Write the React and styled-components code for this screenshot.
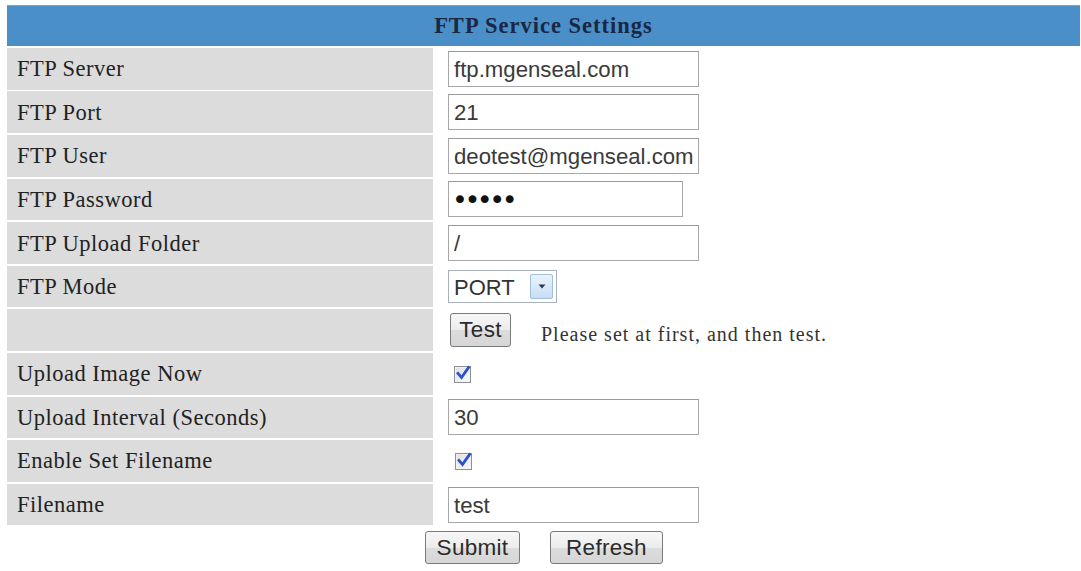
import React from "react";
import styled, { createGlobalStyle } from "styled-components";

const Global = createGlobalStyle`
  html, body { margin: 0; padding: 0; background: #ffffff; }
  body { font-family: "Liberation Serif", "Times New Roman", serif; }
`;

const Page = styled.div`
  padding: 5px 1px 0 7px;
  width: 1073px;
`;

const Form = styled.form`
  display: flex;
  flex-direction: column;
`;

const Sheet = styled.div`
  display: grid;
  grid-template-columns: 426px 1fr;
  row-gap: 1.9px;
  column-gap: 2px;
`;

const Header = styled.div`
  grid-column: 1 / -1;
  height: 41px;
  background: #4a8fc7;
  border-top: 1px solid #6aa6d6;
  box-sizing: border-box;
  display: flex;
  align-items: center;
  justify-content: center;
  font-family: "Liberation Serif", "Times New Roman", serif;
  font-weight: bold;
  font-size: 22.5px;
  color: #1a2744;
  letter-spacing: 1px;
`;

const Label = styled.div`
  height: 41.7px;
  background: #dcdcdc;
  display: flex;
  align-items: center;
  padding-left: 10px;
  font-family: "Liberation Serif", "Times New Roman", serif;
  font-size: 22.5px;
  letter-spacing: 0.5px;
  color: #222222;
  box-sizing: border-box;
  padding-top: 1px;
`;

const Value = styled.div`
  height: 41.7px;
  display: flex;
  align-items: center;
  padding-left: 13px;
  box-sizing: border-box;
  background: #ffffff;
`;

const TextInput = styled.input`
  width: ${(p) => p.$w || 251}px;
  height: 36px;
  box-sizing: border-box;
  border: 1px solid #a7a7a7;
  border-top-color: #9a9a9a;
  padding: 2px 0 0 5px;
  margin: 0;
  font-family: "Liberation Sans", Arial, sans-serif;
  font-size: 22.2px;
  color: #3a3a3a;
  background: #ffffff;
  outline: none;
`;

const PasswordInput = styled(TextInput)`
  font-family: "DejaVu Sans", sans-serif;
  font-size: 27px;
  letter-spacing: -3.5px;
  color: #111;
  padding: 0 0 0 3px;
`;

const SelectWrap = styled.div`
  position: relative;
  width: 109px;
  height: 33px;
`;

const Select = styled.select`
  appearance: none;
  -webkit-appearance: none;
  width: 100%;
  height: 100%;
  box-sizing: border-box;
  border: 1px solid #a9b1bd;
  background: #ffffff;
  padding: 1px 0 0 5px;
  margin: 0;
  font-family: "Liberation Sans", Arial, sans-serif;
  font-size: 22px;
  color: #333;
  outline: none;
`;

const SelectArrow = styled.span`
  position: absolute;
  top: 4px;
  right: 4px;
  width: 23px;
  height: 25px;
  box-sizing: border-box;
  border: 1px solid #9fbde0;
  border-radius: 2px;
  background: linear-gradient(#eaf3fd, #c9ddf5);
  display: flex;
  align-items: center;
  justify-content: center;
  pointer-events: none;
`;

const Button = styled.button`
  width: ${(p) => p.$w}px;
  height: ${(p) => p.$h || 33}px;
  box-sizing: border-box;
  border: 1px solid #7a7a7a;
  border-radius: 3px;
  background: linear-gradient(#f7f7f7 0%, #ececec 50%, #dcdcdc 51%, #d6d6d6 100%);
  font-family: "Liberation Sans", Arial, sans-serif;
  font-size: 22.5px;
  letter-spacing: 0.3px;
  color: #2b2b2b;
  padding: 0;
  margin: 0;
  cursor: pointer;
`;

const TestButton = styled(Button)`
  margin-left: 2px;
`;

const Hint = styled.span`
  margin-left: 30px;
  margin-top: 8px;
  font-family: "Liberation Serif", "Times New Roman", serif;
  font-size: 20px;
  letter-spacing: 1px;
  color: #333;
`;

const CheckWrap = styled.label`
  position: relative;
  display: inline-flex;
  width: 17px;
  height: 17px;
  margin-left: ${(p) => p.$ml || 7}px;
  margin-top: ${(p) => p.$mt || 0}px;
`;

const CheckBox = styled.input`
  appearance: none;
  -webkit-appearance: none;
  margin: 0;
  width: 17px;
  height: 17px;
  box-sizing: border-box;
  border: 1px solid #8d9096;
  background: linear-gradient(135deg, #dcdfe3, #fbfbfb);
  box-shadow: inset 0 0 0 1px #f2f2f2;
`;

const CheckMark = styled.svg`
  position: absolute;
  left: 1px;
  top: -1px;
  pointer-events: none;
`;

const Actions = styled.div`
  display: flex;
  justify-content: center;
  gap: 30px;
  margin-top: 6px;
  padding-left: 1px;
`;

function Check({ ml, mt }) {
  return (
    <CheckWrap $ml={ml} $mt={mt}>
      <CheckBox type="checkbox" defaultChecked />
      <CheckMark width="16" height="17" viewBox="0 0 16 17">
        <path d="M3 8.5 L6.5 12.5 L13.5 2.5" fill="none" stroke="#2d53c9" strokeWidth="2.8" strokeLinecap="square" />
      </CheckMark>
    </CheckWrap>
  );
}

export default function App() {
  return (
    <Page>
      <Global />
      <Form onSubmit={(e) => e.preventDefault()}>
        <Sheet>
          <Header>FTP Service Settings</Header>

          <Label>FTP Server</Label>
          <Value><TextInput defaultValue="ftp.mgenseal.com" /></Value>

          <Label>FTP Port</Label>
          <Value><TextInput defaultValue="21" /></Value>

          <Label>FTP User</Label>
          <Value><TextInput defaultValue="deotest@mgenseal.com" /></Value>

          <Label>FTP Password</Label>
          <Value><PasswordInput type="password" $w={235} defaultValue="abcde" /></Value>

          <Label>FTP Upload Folder</Label>
          <Value><TextInput defaultValue="/" /></Value>

          <Label>FTP Mode</Label>
          <Value>
            <SelectWrap>
              <Select defaultValue="PORT">
                <option value="PORT">PORT</option>
                <option value="PASV">PASV</option>
              </Select>
              <SelectArrow>
                <svg width="8" height="5" viewBox="0 0 8 5">
                  <path d="M0.5 0.5 L7.5 0.5 L4 4.5 Z" fill="#2a3a55" />
                </svg>
              </SelectArrow>
            </SelectWrap>
          </Value>

          <Label />
          <Value>
            <TestButton type="button" $w={61} $h={34}>Test</TestButton>
            <Hint>Please set at first, and then test.</Hint>
          </Value>

          <Label>Upload Image Now</Label>
          <Value><Check ml={6} mt={2} /></Value>

          <Label>Upload Interval (Seconds)</Label>
          <Value><TextInput defaultValue="30" /></Value>

          <Label>Enable Set Filename</Label>
          <Value><Check ml={7} mt={2} /></Value>

          <Label>Filename</Label>
          <Value><TextInput defaultValue="test" /></Value>
        </Sheet>

        <Actions>
          <Button type="submit" $w={95}>Submit</Button>
          <Button type="button" $w={113}>Refresh</Button>
        </Actions>
      </Form>
    </Page>
  );
}
